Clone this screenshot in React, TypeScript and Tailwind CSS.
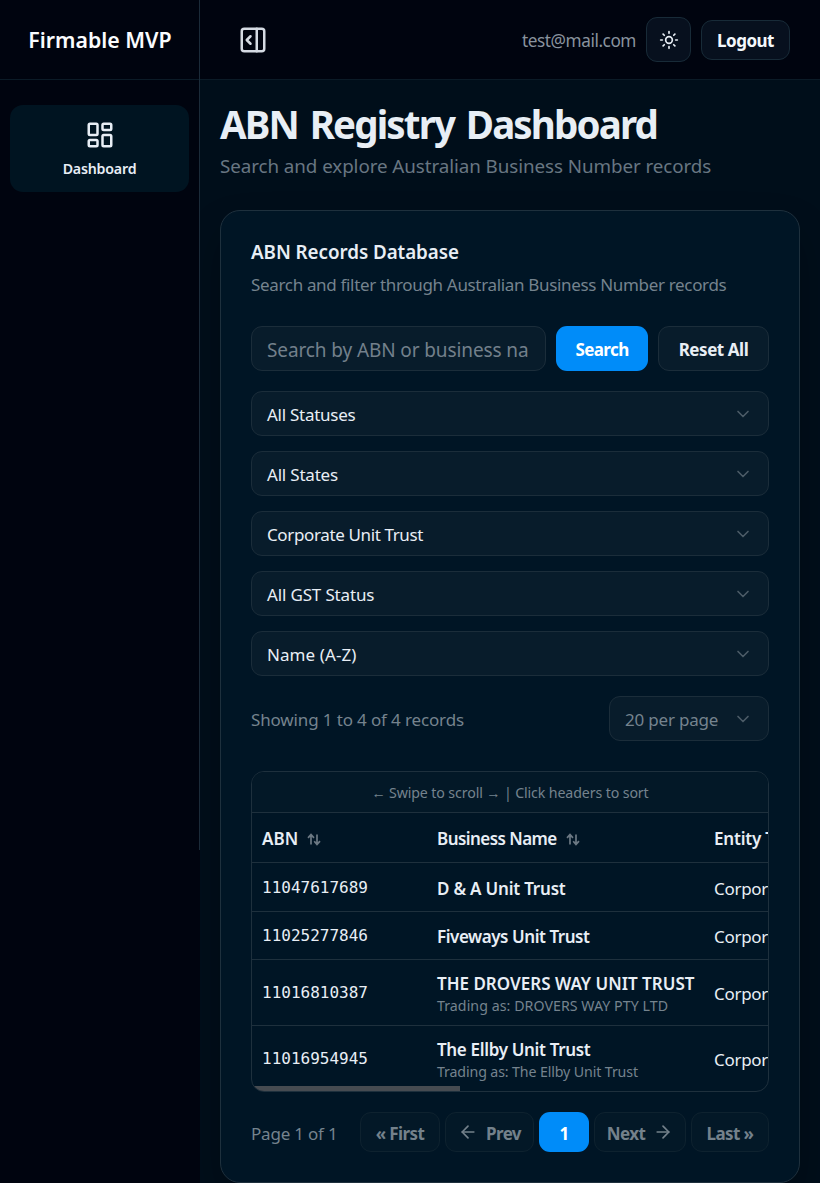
import React from 'react';
import { ArrowLeft, ArrowRight, ChevronDown, LayoutDashboard, PanelRightOpen, Sun } from 'lucide-react';

const filters = [
  { label: 'All Statuses', tracking: 'tracking-[-0.27px]' },
  { label: 'All States', tracking: 'tracking-[-0.2px]' },
  { label: 'Corporate Unit Trust', tracking: 'tracking-[-0.37px]' },
  { label: 'All GST Status', tracking: 'tracking-[-0.15px]' },
  { label: 'Name (A-Z)', tracking: 'tracking-[0.08px]' },
];

const records = [
  { abn: '11047617689', name: 'D & A Unit Trust', trading: '', height: 'h-[49px]', pad: 'pt-[3px]', tracking: 'tracking-[-0.2px]', sub: '' },
  { abn: '11025277846', name: 'Fiveways Unit Trust', trading: '', height: 'h-12', pad: 'pt-0.5', tracking: 'tracking-[-0.45px]', sub: '' },
  { abn: '11016810387', name: 'THE DROVERS WAY UNIT TRUST', trading: 'Trading as: DROVERS WAY PTY LTD', height: 'h-[66px]', pad: 'pt-0.5', tracking: 'tracking-normal', sub: 'tracking-[0.05px]' },
  { abn: '11016954945', name: 'The Ellby Unit Trust', trading: 'Trading as: The Ellby Unit Trust', height: 'h-[65px]', pad: 'pt-0.5', tracking: 'tracking-[-0.33px]', sub: 'tracking-[-0.12px]' },
];

function SortIcon() {
  return (
    <svg width="14" height="13" viewBox="0 0 14 13" fill="none" stroke="currentColor" strokeWidth="1.7" className="mt-0.5 shrink-0 text-[#6b7883]">
      <path d="M4 11.5V1.8M1 4.8l3-3.2 3 3.2M10 1.5v9.7M7.2 8.2l2.8 3.2 3-3.2" />
    </svg>
  );
}

function Sidebar() {
  return (
    <aside className="flex h-[850px] w-[200px] shrink-0 flex-col border-r border-[#1b2b39]">
      <div className="flex h-20 items-center justify-center border-b border-[#0b1b27] pl-px">
        <span className="whitespace-nowrap pt-px text-[21.3px] font-semibold text-[#fafcfe]">Firmable MVP</span>
      </div>
      <nav className="px-2.5 pt-[25px]">
        <a className="flex h-[87px] flex-col items-center rounded-[13px] bg-[#001421] pt-[15px] text-[#e8eef5]">
          <LayoutDashboard size={30} strokeWidth={2} />
          <span className="mt-2.5 text-[14.2px] font-semibold leading-[18px] tracking-[-0.2px]">Dashboard</span>
        </a>
      </nav>
    </aside>
  );
}

function TopBar() {
  return (
    <header className="flex h-20 items-center border-b border-[#0b1b27] bg-[#00040f] pl-[38px] pr-[30px]">
      <PanelRightOpen size={30} className="text-[#d5dbe3]" />
      <span className="ml-auto pt-0.5 text-[17.2px] tracking-[-0.44px] text-[#89939e]">test@mail.com</span>
      <button className="ml-2.5 flex size-[45px] items-center justify-center rounded-[11px] border border-[#182b38] bg-[#07101e] text-[#e8eef5]">
        <Sun size={20} />
      </button>
      <button className="ml-2.5 h-10 w-[89px] rounded-[11px] border border-[#182b38] bg-[#07101e] pt-0.5 text-[17px] font-bold tracking-[-0.5px] text-[#f4f8fc]">
        Logout
      </button>
    </header>
  );
}

function SelectBox({ label, className }: { label: string; className: string }) {
  return (
    <button className={`flex h-[45px] items-center justify-between rounded-[11px] border border-[#1b2d3a] bg-[#081c2b] px-[15px] ${className}`}>
      <span className="whitespace-nowrap pt-0.5">{label}</span>
      <ChevronDown size={20} className="text-[#4c5b67]" />
    </button>
  );
}

function RecordsTable() {
  return (
    <div className="relative mt-[30px] h-[321px] overflow-hidden rounded-[13px] border border-[#1e303d]">
      <div className="flex h-[41px] items-center justify-center border-b border-[#1e303d] bg-[#031827] pt-0.5 text-[14.2px] tracking-[-0.12px] text-[#75838e]">
        ← Swipe to scroll → | Click headers to sort
      </div>
      <div className="w-[700px] text-[17px] text-[#e8eef5]">
        <div className="grid h-[50px] grid-cols-[175px_277px_248px] items-center border-b border-[#1e303d] pt-0.5 font-semibold">
          <div className="flex items-center gap-[9px] pl-2.5">
            ABN <SortIcon />
          </div>
          <div className="flex items-center gap-[9px] pl-2.5 tracking-[-0.55px]">
            Business Name <SortIcon />
          </div>
          <div className="pl-2.5 tracking-[-0.2px]">Entity Type</div>
        </div>
        {records.map((r) => (
          <div key={r.abn} className={`grid grid-cols-[175px_277px_248px] items-center border-b border-[#1e303d] last:border-0 ${r.height}`}>
            <div className="pl-2.5 pt-px font-['DejaVu_Sans_Mono',monospace] text-[16px]">{r.abn}</div>
            <div className={`whitespace-nowrap pl-2.5 ${r.pad}`}>
              <div className={`font-semibold leading-[24px] ${r.tracking}`}>{r.name}</div>
              {r.trading && <div className={`text-[14.2px] leading-5 text-[#75838e] ${r.sub}`}>{r.trading}</div>}
            </div>
            <div className={`whitespace-nowrap pl-2.5 tracking-[-0.3px] ${r.pad}`}>Corporate Unit Trust</div>
          </div>
        ))}
      </div>
      <div className="absolute bottom-0 left-0 h-[5px] w-[208px] bg-[#464b51]" />
    </div>
  );
}

function Pagination() {
  const ghost = 'flex h-10 items-center justify-center whitespace-nowrap rounded-[11px] border border-[#0e222f] bg-[#031827] text-[#74818b]';
  return (
    <div className="mt-5 flex h-10 items-center gap-[5px] text-[17px] font-bold tracking-[-0.6px]">
      <span className="mr-auto whitespace-nowrap pt-[3px] font-normal tracking-[-0.2px] text-[#75838e]">Page 1 of 1</span>
      <button className={`${ghost} w-20`}>
        <span className="pt-[3px]">« First</span>
      </button>
      <button className={`${ghost} w-[89px] gap-2`}>
        <ArrowLeft size={20} />
        <span className="pt-[3px]">Prev</span>
      </button>
      <button className="h-10 w-[50px] rounded-[11px] bg-[#008cf9] pt-[3px] text-white">1</button>
      <button className={`${ghost} w-[92px] gap-2`}>
        <span className="pt-[3px]">Next</span>
        <ArrowRight size={20} />
      </button>
      <button className={`${ghost} w-[78px]`}>
        <span className="pt-[3px]">Last »</span>
      </button>
    </div>
  );
}

export default function App() {
  return (
    <div className="flex h-[1183px] w-[820px] overflow-hidden bg-[#00040f] font-['Noto_Sans',sans-serif]">
      <Sidebar />
      <div className="flex min-w-0 flex-1 flex-col overflow-hidden bg-[#000e1a]">
        <TopBar />
        <main className="px-5 pt-5">
          <h1 className="h-[50px] whitespace-nowrap text-[38.5px] font-bold leading-[48px] tracking-[-1.85px] text-[#e8eef5] [word-spacing:3.5px]">
            ABN Registry Dashboard
          </h1>
          <p className="h-[30px] whitespace-nowrap text-[18.8px] leading-[32px] tracking-[-0.07px] text-[#687682]">
            Search and explore Australian Business Number records
          </p>
          <section className="mt-[30px] h-[973px] rounded-[20px] border border-[#1e303d] bg-[#001525] px-[30px] pt-[25px] shadow-[0_20px_40px_-4px_rgba(0,0,0,0.3)]">
            <h2 className="whitespace-nowrap text-[18.8px] font-semibold leading-[32px] tracking-[-0.05px] text-[#e8eef5]">ABN Records Database</h2>
            <p className="mt-px whitespace-nowrap text-[17px] leading-[32px] tracking-[-0.33px] text-[#75838e]">
              Search and filter through Australian Business Number records
            </p>
            <div className="mt-[25px] flex h-[45px] gap-2.5">
              <div className="flex w-[295px] items-center rounded-[11px] border border-[#1b2d3a] bg-[#081c2b] px-[15px]">
                <span className="whitespace-nowrap pt-[3px] text-[19px] tracking-[-0.11px] text-[#73808b]">Search by ABN or business na</span>
              </div>
              <button className="w-[92px] rounded-[11px] bg-[#008cf9] pt-0.5 text-[17px] font-bold tracking-[-0.6px] text-white">Search</button>
              <button className="w-[111px] rounded-[11px] border border-[#1b2d3a] bg-[#081c2b] pt-0.5 text-[17px] font-bold tracking-[-0.45px] text-[#e8eef5]">Reset All</button>
            </div>
            <div className="mt-5 flex flex-col gap-[15px] text-[17px] text-[#e8eef5]">
              {filters.map((f) => (
                <SelectBox key={f.label} label={f.label} className={`w-full ${f.tracking}`} />
              ))}
            </div>
            <div className="mt-5 flex h-[45px] items-center justify-between text-[17px] tracking-[-0.14px] text-[#75838e]">
              <span className="pt-0.5">Showing 1 to 4 of 4 records</span>
              <SelectBox label="20 per page" className="w-40 tracking-[-0.2px]" />
            </div>
            <RecordsTable />
            <Pagination />
          </section>
        </main>
      </div>
    </div>
  );
}
